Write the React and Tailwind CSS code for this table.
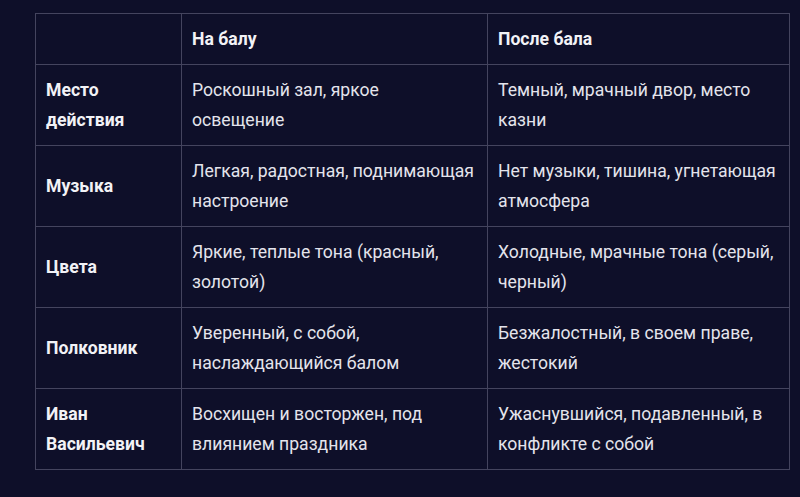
export default function App() {
  const rows = [
    ["Место действия", "Роскошный зал, яркое освещение", "Темный, мрачный двор, место казни"],
    ["Музыка", "Легкая, радостная, поднимающая настроение", "Нет музыки, тишина, угнетающая атмосфера"],
    ["Цвета", "Яркие, теплые тона (красный, золотой)", "Холодные, мрачные тона (серый, черный)"],
    ["Полковник", "Уверенный, с собой, наслаждающийся балом", "Безжалостный, в своем праве, жестокий"],
    ["Иван Васильевич", "Восхищен и восторжен, под влиянием праздника", "Ужаснувшийся, подавленный, в конфликте с собой"],
  ];
  const cell = "border border-[#44445e] pl-[10px] pr-[13px] py-[10px] align-middle text-left";
  return (
    <div className="w-[800px] h-[497px] bg-[#0e0f29] pt-[13px] pl-[35px] overflow-hidden" style={{ fontFamily: "Roboto, 'Noto Sans', sans-serif" }}>
      <table className="border-collapse table-fixed w-[754px] text-[17.6px] leading-[30px] text-[#e4e4ec]">
        <colgroup>
          <col className="w-[146px]" />
          <col className="w-[306px]" />
          <col className="w-[302px]" />
        </colgroup>
        <thead>
          <tr>
            <th className={cell}></th>
            <th className={cell + " font-bold text-[#f2f2f6]"}>На балу</th>
            <th className={cell + " font-bold text-[#f2f2f6]"}>После бала</th>
          </tr>
        </thead>
        <tbody>
          {rows.map((r, i) => (
            <tr key={i}>
              <td className={cell + " font-bold text-[#f2f2f6]"}>{r[0]}</td>
              <td className={cell}>{r[1]}</td>
              <td className={cell}>{r[2]}</td>
            </tr>
          ))}
        </tbody>
      </table>
    </div>
  );
}
